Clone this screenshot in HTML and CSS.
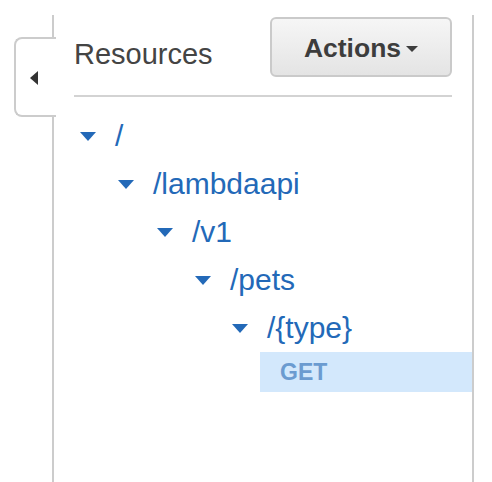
FILE: index.html
```html
<!DOCTYPE html>
<html>
<head>
<meta charset="utf-8">
<link rel="stylesheet" href="styles.css">
</head>
<body>
<div class="panel">
  <div class="tab"><span class="tab-arrow"></span></div>
  <div class="header">
    <h2 class="title">Resources</h2>
    <button class="actions">Actions<span class="caret"></span></button>
  </div>
  <ul class="tree">
    <li class="node lvl0"><span class="tri"></span><span class="path">/</span></li>
    <li class="node lvl1"><span class="tri"></span><span class="path">/lambdaapi</span></li>
    <li class="node lvl2"><span class="tri"></span><span class="path">/v1</span></li>
    <li class="node lvl3"><span class="tri"></span><span class="path">/pets</span></li>
    <li class="node lvl4"><span class="tri"></span><span class="path">/{type}</span></li>
    <li class="method">GET</li>
  </ul>
</div>
</body>
</html>
```
FILE: styles.css
```css
html, body {
  margin: 0;
  padding: 0;
  background: #fff;
  font-family: "Liberation Sans", Arial, sans-serif;
}
.panel {
  position: relative;
  margin: 15px 0 0 52px;
  width: 422px;
  height: 467px;
  box-sizing: border-box;
  border-left: 2px solid #cccccc;
  border-right: 2px solid #cccccc;
}
.tab {
  position: absolute;
  left: -40px;
  top: 22px;
  width: 42px;
  height: 80px;
  box-sizing: border-box;
  background: #fff;
  border: 2px solid #cccccc;
  border-right: none;
  border-radius: 8px 0 0 8px;
  display: flex;
  align-items: center;
  padding-left: 14px;
}
.tab-arrow {
  width: 0;
  height: 0;
  border-top: 7px solid transparent;
  border-bottom: 7px solid transparent;
  border-right: 8px solid #333;
  margin-top: 1px;
}
.header {
  display: flex;
  justify-content: space-between;
  align-items: flex-start;
  margin: 0 20px 0 20px;
  height: 80px;
  border-bottom: 2px solid #d3d3d3;
}
.title {
  margin: 25px 0 0 0;
  font-size: 29px;
  line-height: 29px;
  font-weight: normal;
  color: #444;
}
.actions {
  margin-top: 2px;
  width: 182px;
  height: 60px;
  box-sizing: border-box;
  border: 2px solid #cacaca;
  border-radius: 6px;
  background: linear-gradient(#f6f6f6, #e4e4e4);
  font-family: "Liberation Sans", Arial, sans-serif;
  font-weight: bold;
  font-size: 26.5px;
  line-height: 26px;
  color: #3d3d3d;
  display: flex;
  align-items: center;
  justify-content: center;
  gap: 5px;
  padding: 2px 0 0 0;
}
.caret {
  width: 0;
  height: 0;
  border-left: 6px solid transparent;
  border-right: 6px solid transparent;
  border-top: 6px solid #3d3d3d;
  margin-top: 2px;
}
.tree {
  list-style: none;
  margin: 0;
  padding: 15px 0 0 20px;
}
.node {
  display: flex;
  align-items: center;
  height: 48px;
  font-size: 30px;
  line-height: 48px;
  color: #2369b8;
}
.lvl0 { padding-left: 6px; }
.lvl1 { padding-left: 44px; }
.lvl2 { padding-left: 83px; }
.lvl3 { padding-left: 121px; }
.lvl4 { padding-left: 158px; }
.tri {
  width: 0;
  height: 0;
  border-left: 8px solid transparent;
  border-right: 8px solid transparent;
  border-top: 9px solid #2369b8;
  margin-right: 19px;
}
.path {
  display: block;
}
.method {
  margin-left: 186px;
  height: 40px;
  background: #d3e8fc;
  display: flex;
  align-items: center;
  padding-left: 20px;
  font-size: 23px;
  font-weight: bold;
  color: #6b9bd0;
}
```
